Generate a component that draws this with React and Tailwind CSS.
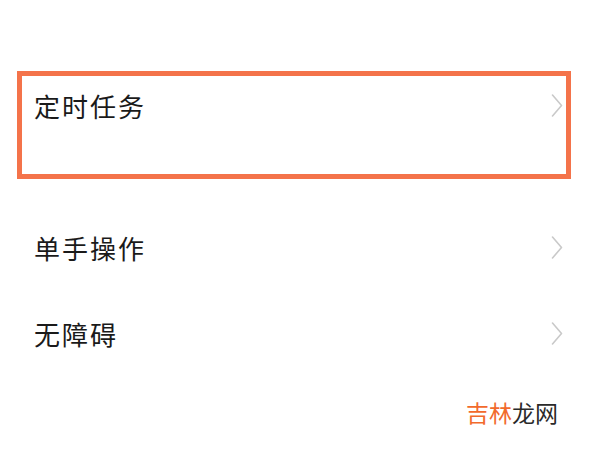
import React from 'react';

const Chevron = () => (
  <svg width="12" height="23" viewBox="0 0 12 23" fill="none" className="shrink-0">
    <polyline points="1.5,1 10.5,11.5 1.5,22" stroke="#c9c9c9" strokeWidth="1.6" strokeLinecap="round" strokeLinejoin="round" />
  </svg>
);

const Row = ({ label }) => (
  <div className="flex h-[86px] items-center justify-between pl-[34px] pr-[37px]">
    <span className="text-[26px] tracking-[2px] text-[#1a1a1a]">{label}</span>
    <Chevron />
  </div>
);

export default function App() {
  return (
    <div
      className="h-[450px] w-[600px] overflow-hidden bg-white"
      style={{ fontFamily: '"Noto Sans CJK SC", "Noto Sans", sans-serif' }}
    >
      <div className="h-[71px]" />

      {/* highlighted row */}
      <div className="ml-[17px] h-[108px] w-[554px] border-[5px] border-[#f4734a]">
        <div className="flex h-[58px] items-center justify-between pl-[12px] pr-[3px]">
          <span className="text-[26px] tracking-[2px] text-[#1a1a1a]">定时任务</span>
          <Chevron />
        </div>
      </div>

      <div className="mt-[25px]">
        <Row label="单手操作" />
        <Row label="无障碍" />
      </div>

      {/* watermark */}
      <div className="mt-[21px] flex justify-end pr-[42px]">
        <span className="text-[23px] leading-[30px]">
          <span className="text-[#f26a2c]">吉林</span>
          <span className="text-[#2a2a2a]">龙网</span>
        </span>
      </div>
    </div>
  );
}
